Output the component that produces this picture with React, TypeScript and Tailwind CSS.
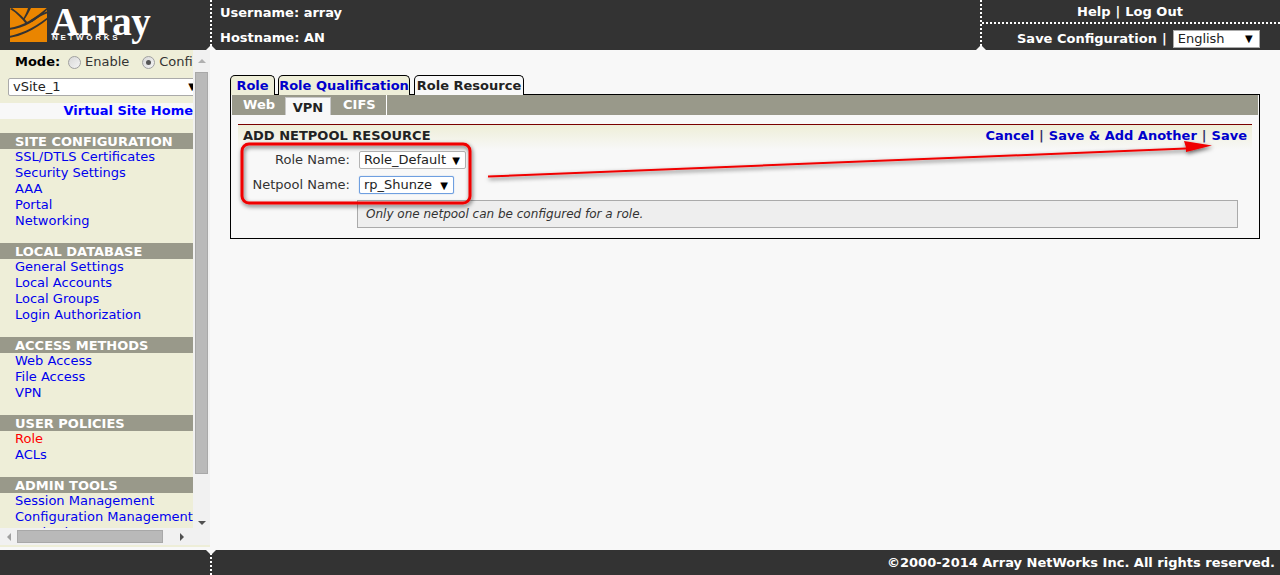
import React from "react";

const F = "font-['DejaVu_Sans','Liberation_Sans',sans-serif]";

const sections: { title: string; links: string[]; active?: string }[] = [
  { title: "SITE CONFIGURATION", links: ["SSL/DTLS Certificates", "Security Settings", "AAA", "Portal", "Networking"] },
  { title: "LOCAL DATABASE", links: ["General Settings", "Local Accounts", "Local Groups", "Login Authorization"] },
  { title: "ACCESS METHODS", links: ["Web Access", "File Access", "VPN"] },
  { title: "USER POLICIES", links: ["Role", "ACLs"], active: "Role" },
  { title: "ADMIN TOOLS", links: ["Session Management", "Configuration Management", "Monitoring"] },
];

function Tri({ up = true, className = "" }: { up?: boolean; className?: string }) {
  return (
    <span
      className={`absolute w-0 h-0 border-l-[5px] border-r-[5px] border-l-transparent border-r-transparent ${up ? "border-b-[5px] border-b-[#f8f8f8]" : "border-t-[5px] border-t-[#f8f8f8]"} ${className}`}
    />
  );
}

function Radio({ on }: { on?: boolean }) {
  return (
    <span className="inline-flex items-center justify-center w-[13px] h-[13px] rounded-full border border-[#a0a0a0] bg-gradient-to-br from-[#d8d8d8] to-[#f4f4f4]">
      {on && <span className="w-[5px] h-[5px] rounded-full bg-[#555]" />}
    </span>
  );
}

function Sel({ text, w, focus }: { text: string; w: string; focus?: boolean }) {
  return (
    <div
      className={`${w} h-[18px] bg-white rounded-[2px] flex items-center justify-between pl-[4px] pr-[5px] text-[13px] text-[#222] border ${focus ? "border-[#6f9fe0] shadow-[0_0_1px_#6f9fe0]" : "border-[#b4b4b4]"}`}
    >
      <span>{text}</span>
      <span className="text-[10px] text-black">▼</span>
    </div>
  );
}

function Logo() {
  return (
    <div className="relative w-[210px] h-[50px] shrink-0">
      <svg width="40" height="38" viewBox="0 0 40 38" className="absolute left-[9px] top-[6px]">
        <rect x="1" y="2" width="37" height="34" fill="#ea8500" />
        <path d="M0 22 C14 20 26 12 39 1 L39 3 C28 14 16 22 0 24Z" fill="#333" />
        <path d="M3 2 C10 7 15 12 19 17 L17 18 C13 13 8 7 1 3Z" fill="#333" />
        <path d="M22 2 C20 6 18 10 15 14 L14 13 C16 9 18 6 19 2Z" fill="#333" />
        <path d="M0 30 C10 28 22 24 39 11 L39 13 C24 25 12 30 0 32Z" fill="#333" />
        <path d="M22 14 C28 10 33 7 39 5 L39 7 C33 9 28 12 23 16Z" fill="#333" />
      </svg>
      <span className="absolute left-[51px] top-[0px] font-['Liberation_Serif',serif] font-bold text-[39px] leading-[44px] text-white tracking-[-0.5px]">
        Array
      </span>
      <span className="absolute left-[52px] top-[33px] font-['Liberation_Sans',sans-serif] font-bold text-[8px] leading-[10px] tracking-[2.7px] text-white">
        NETWORKS
      </span>
    </div>
  );
}

function Header() {
  return (
    <div className="h-[50px] bg-[#333333] flex shrink-0 text-white font-bold text-[13px]">
      <Logo />
      <div className="relative flex-1 border-l-2 border-dotted border-white pl-[8px] flex flex-col">
        <Tri className="left-[-6px] bottom-0" />
        <div className="h-[25px] pt-[4px] leading-[17px]">Username: array</div>
        <div className="h-[25px] pt-[4px] leading-[17px]">Hostname: AN</div>
      </div>
      <div className="relative w-[300px] border-l-2 border-dotted border-white flex flex-col shrink-0">
        <Tri className="left-[-6px] bottom-0" />
        <div className="h-[24px] border-b-2 border-dotted border-white flex items-start justify-center pt-[3px] pr-[2px] leading-[17px] gap-[5px]">
          <span>Help</span>
          <span>|</span>
          <span>Log Out</span>
        </div>
        <div className="flex-1 flex items-center pl-[35px] gap-[5px] pt-[3px]">
          <span>Save Configuration</span>
          <span>|</span>
          <div className="ml-[1px] w-[87px] h-[18px] bg-white border border-[#aaa] flex items-center justify-between pl-[4px] pr-[6px] text-[13px] font-normal text-[#222]">
            <span>English</span>
            <span className="text-[10px] text-black">▼</span>
          </div>
        </div>
      </div>
    </div>
  );
}

function Sidebar() {
  return (
    <div className="w-[210px] shrink-0 flex flex-col h-[497px] bg-[#eeeed8]">
      <div className="flex h-[478px] bg-[#f1f1f1] overflow-hidden">
        <div className="w-[193px] shrink-0 bg-[#eeeed8] overflow-hidden text-[13px] leading-[16px]">
          <div className="w-[260px] h-[22px] flex items-center pt-[2px] pl-[15px] text-black">
            <span className="font-bold w-[53px]">Mode:</span>
            <Radio />
            <span className="ml-[4px] text-[#333]">Enable</span>
            <span className="ml-[13px] flex items-center">
              <Radio on />
            </span>
            <span className="ml-[4px] text-[#333]">Configuration</span>
          </div>
          <div className="h-[31px] pt-[6px] w-[193px] overflow-hidden">
            <div className="ml-[8px] w-[200px] h-[18px] bg-white border border-[#aaa] rounded-[2px] flex items-center pl-[4px] pr-[11px] justify-between text-[#222]">
              <span>vSite_1</span>
              <span className="text-[10px] text-black">▼</span>
            </div>
          </div>
          <div className="h-[16px] bg-[#f8f8f8] text-right font-bold text-[#0000ff] leading-[16px]">
            Virtual Site Home
          </div>
          <div className="h-[14px]" />
          {sections.map((s) => (
            <div key={s.title} className="mb-[14px]">
              <div className="h-[16px] bg-[#99998a] pl-[15px] font-bold text-white leading-[17px]">{s.title}</div>
              {s.links.map((l) => (
                <div key={l} className={`pl-[15px] h-[16px] leading-[15px] whitespace-nowrap ${l === s.active ? "text-[#ff0000]" : "text-[#0000ee]"}`}>
                  {l}
                </div>
              ))}
            </div>
          ))}
        </div>
        <div className="w-[17px] shrink-0 flex flex-col items-center bg-[#f1f1f1]">
          <div className="h-[22px] flex items-center justify-center">
            <span className="w-0 h-0 border-l-[4px] border-r-[4px] border-b-[4px] border-l-transparent border-r-transparent border-b-[#b0b0b0]" />
          </div>
          <div className="w-[13px] h-[402px] bg-[#b9b9b9] border border-[#a8a8a8]" />
          <div className="flex-1 flex items-end justify-center pb-[3px] pt-[30px]">
            <span className="w-0 h-0 border-l-[4px] border-r-[4px] border-t-[4px] border-l-transparent border-r-transparent border-t-[#505050]" />
          </div>
        </div>
      </div>
      <div className="h-[17px] bg-[#f1f1f1] flex items-center shrink-0">
        <div className="w-[17px] flex items-center justify-center">
          <span className="w-0 h-0 border-t-[4px] border-b-[4px] border-r-[4px] border-t-transparent border-b-transparent border-r-[#a0a0a0]" />
        </div>
        <div className="w-[146px] h-[13px] bg-[#b9b9b9] border border-[#a8a8a8]" />
        <div className="ml-[17px] w-[5px]">
          <span className="block w-0 h-0 border-t-[4px] border-b-[4px] border-l-[4px] border-t-transparent border-b-transparent border-l-[#505050]" />
        </div>
      </div>
      <div className="h-[2px] bg-[#eeeed8]" />
      <div className="flex-1 bg-[#f8f8f8]" />
    </div>
  );
}

function Tab({ label, w, active }: { label: string; w: string; active?: boolean }) {
  return (
    <div
      className={`${w} h-[20px] border border-black rounded-t-[5px] text-center font-bold leading-[19px] ${active ? "border-b-0 bg-[#f8f8f8] text-[#222] h-[20px]" : "border-b-0 bg-[#eeeed8] text-[#0000cc]"}`}
    >
      {label}
    </div>
  );
}

function Content() {
  return (
    <div className="flex-1 bg-[#f8f8f8] pt-[25px] pl-[20px] pr-[20px] text-[13px]">
      <div className="flex">
        <Tab label="Role" w="w-[45px]" />
        <div className="w-[3px]" />
        <Tab label="Role Qualification" w="w-[132px]" />
        <div className="w-[4px]" />
        <Tab label="Role Resource" w="w-[110px]" active />
      </div>
      <div className="h-[145px] border border-black -mt-px bg-[#f8f8f8] px-px">
        <div className="h-[20px] bg-[#99998a] flex items-end font-bold text-[13px] text-white">
          <div className="w-[53px] h-[20px] pl-[11px] leading-[20px]">Web</div>
          <div className="w-[46px] h-[18px] bg-[#f8f8f8] border border-[#c8c8c8] border-b-0 text-[#222] text-center leading-[19px]">VPN</div>
          <div className="w-[56px] h-[20px] border-r border-white pl-[12px] leading-[20px]">CIFS</div>
        </div>
        <div className="mt-[9px] mx-[6px] border-t border-[#7a0000] h-[26px] bg-gradient-to-b from-[#eeeed8] to-[#f8f8f8] flex items-center justify-between pl-[5px] pr-[5px] font-bold">
          <span className="text-[#222] pb-[4px]">ADD NETPOOL RESOURCE</span>
          <span className="flex gap-[5px] pb-[4px] text-[#0000cc]">
            <span>Cancel</span>
            <span className="text-[#333366]">|</span>
            <span>Save &amp; Add Another</span>
            <span className="text-[#333366]">|</span>
            <span>Save</span>
          </span>
        </div>
        <div className="mt-[1px] flex items-center h-[18px]">
          <span className="w-[118px] text-right text-[#333] mr-[9px]">Role Name:</span>
          <Sel text="Role_Default" w="w-[107px]" />
        </div>
        <div className="mt-[7px] flex items-center h-[18px]">
          <span className="w-[118px] text-right text-[#333] mr-[9px]">Netpool Name:</span>
          <Sel text="rp_Shunze" w="w-[95px]" focus />
        </div>
        <div className="mt-[6px] ml-[125px] mr-[20px] h-[28px] bg-[#eeeeee] border border-[#aaaaaa] pl-[8px] flex items-center italic text-[12px] text-[#333]">
          Only one netpool can be configured for a role.
        </div>
      </div>
    </div>
  );
}

function Annotations() {
  return (
    <svg width="1280" height="575" className="absolute left-0 top-0 pointer-events-none">
      <defs>
        <filter id="sh" x="-10%" y="-50%" width="120%" height="250%">
          <feDropShadow dx="1" dy="2" stdDeviation="2" floodColor="#000" floodOpacity="0.6" />
        </filter>
      </defs>
      <rect x="242" y="144" width="228" height="59" rx="7" fill="none" stroke="#f00000" strokeWidth="3" filter="url(#sh)" />
      <path d="M488 175.5 L1186 147.5 L1184 141 L1212 145.5 L1186 152 L1186 149.5 L488 177.5 Z" fill="#f00000" filter="url(#sh)" />
    </svg>
  );
}

export default function App() {
  return (
    <div className={`relative w-[1280px] h-[575px] overflow-hidden flex flex-col bg-[#f8f8f8] ${F}`}>
      <Header />
      <div className="flex flex-1 min-h-0">
        <Sidebar />
        <Content />
      </div>
      <div className="h-[25px] bg-[#333333] flex shrink-0 text-white font-bold text-[13px]">
        <div className="w-[210px] shrink-0" />
        <div className="relative flex-1 border-l-2 border-dotted border-white text-right pr-[5px] pt-[4px] leading-[17px]">
          <Tri up={false} className="left-[-6px] top-0" />
          ©2000-2014 Array NetWorks Inc. All rights reserved.
        </div>
      </div>
      <Annotations />
    </div>
  );
}
